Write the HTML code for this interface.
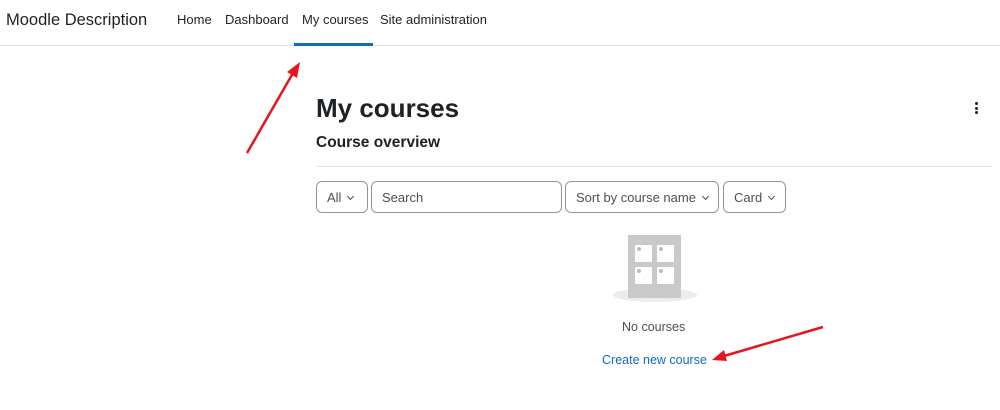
<!DOCTYPE html>
<html><head><meta charset="utf-8"><style>
*{margin:0;padding:0;box-sizing:border-box}
body{width:1000px;height:410px;background:#fff;font-family:"Liberation Sans",sans-serif;color:#1d2125;position:relative;overflow:hidden}
.hdr{position:absolute;left:0;top:0;width:1000px;height:46px;border-bottom:1px solid #dee2e6}
.abs{position:absolute;white-space:nowrap}
.brand{left:6px;top:11px;font-size:16.5px;color:#1d2125}
.nav{top:12px;font-size:13px;color:#1d2125}
.ul{position:absolute;left:294px;top:43px;width:79px;height:3px;background:#0f6cbf}
h1{position:absolute;left:316px;top:93px;font-size:26px;font-weight:bold}
h2{position:absolute;left:316px;top:134px;font-size:15.5px;font-weight:bold}
.hr{position:absolute;left:316px;top:166px;width:676px;height:1px;background:#e6e6e6}
.box{position:absolute;top:181px;height:32px;border:1px solid #8f959e;border-radius:6px;font-size:13px;color:#495057;padding:8px 10px;white-space:nowrap}
.chev{display:inline-block;width:5px;height:5px;border-right:1.5px solid #495057;border-bottom:1.5px solid #495057;transform:rotate(45deg);margin-left:7px;position:relative;top:-3px}
.dots{position:absolute;left:975px;top:102px;width:4px}
.dots i{display:block;width:3px;height:3px;background:#1d2125;border-radius:50%;margin-bottom:1.5px}
</style></head><body>
<div class="hdr"></div>
<div class="abs brand">Moodle Description</div>
<div class="abs nav" style="left:177px">Home</div>
<div class="abs nav" style="left:225px">Dashboard</div>
<div class="abs nav" style="left:302px">My courses</div>
<div class="abs nav" style="left:380px">Site administration</div>
<div class="ul"></div>
<h1>My courses</h1>
<h2>Course overview</h2>
<div class="dots"><i></i><i></i><i></i></div>
<div class="hr"></div>
<div class="box" style="left:316px;width:52px">All<span class="chev"></span></div>
<div class="box" style="left:371px;width:191px">Search</div>
<div class="box" style="left:565px;width:154px">Sort by course name<span class="chev"></span></div>
<div class="box" style="left:723px;width:63px">Card<span class="chev"></span></div>
<svg class="abs" style="left:600px;top:228px" width="110" height="80">
<ellipse cx="55" cy="67" rx="42" ry="7" fill="#ececec"/>
<rect x="28" y="7" width="53" height="63" fill="#c7c9cb"/>
<g fill="#fff"><rect x="35" y="17" width="17" height="17"/><rect x="57" y="17" width="17" height="17"/><rect x="35" y="39" width="17" height="17"/><rect x="57" y="39" width="17" height="17"/></g>
<g fill="#bbb"><circle cx="39" cy="21" r="2"/><circle cx="61" cy="21" r="2"/><circle cx="39" cy="43" r="2"/><circle cx="61" cy="43" r="2"/></g>
</svg>
<div class="abs" style="left:622px;top:320px;font-size:12.5px;color:#495057">No courses</div>
<div class="abs" style="left:602px;top:353px;font-size:12.5px;color:#0f6cbf">Create new course</div>
<svg class="abs" style="left:0;top:0" width="1000" height="410">
<g stroke="#e8141b" stroke-width="2.5" fill="#e8141b">
<line x1="247" y1="153" x2="293" y2="73"/>
<polygon points="300,62 287,72 297,78" stroke="none"/>
<line x1="823" y1="327" x2="724" y2="356"/>
<polygon points="712,360 724,350 727,361" stroke="none"/>
</g></svg>
</body></html>
